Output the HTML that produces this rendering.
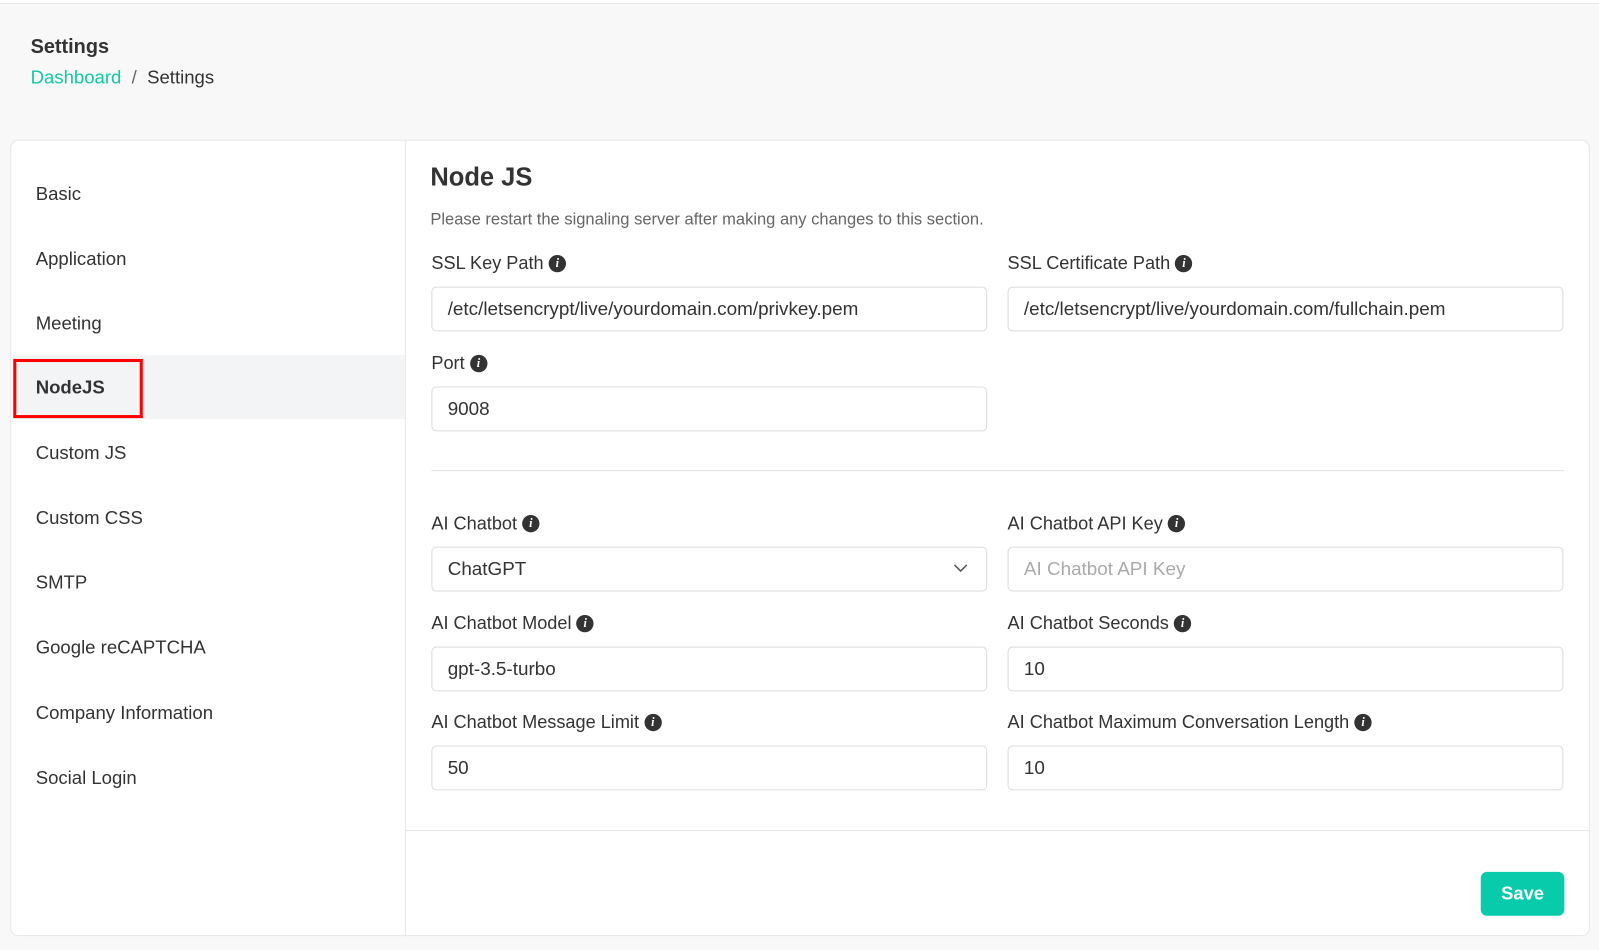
<!DOCTYPE html><html><head><style>
*{box-sizing:border-box}body{margin:0;width:1599px;height:950px;background:#f8f8f8;font-family:"Liberation Sans",sans-serif;color:#333;position:relative;overflow:hidden}
#w{position:absolute;left:0;top:0;width:1568px;height:932px;transform:scale(1.0198);transform-origin:0 0}
.a{position:absolute}
.top{left:0;top:0;width:1568px;height:4px;border-bottom:1px solid #e6e6e6;background:#fff}
.card{left:10px;top:137px;width:1549px;height:781px;background:#fff;border:1px solid #e8e8e8;border-radius:8px}
.side{left:10px;top:137px;width:388px;height:781px;border-right:1px solid #e8e8e8}
.it{position:absolute;left:35px;font-size:18.2px;color:#333;line-height:20px}
.lbl{position:absolute;font-size:17.8px;color:#333;line-height:20px;display:flex;align-items:center;gap:5px}
.i{width:17px;height:17px;border-radius:50%;background:#333;color:#fff;font-size:12px;font-weight:bold;font-family:"Liberation Serif",serif;font-style:italic;display:inline-flex;align-items:center;justify-content:center}
.in{position:absolute;height:44px;border:1px solid #dcdcdc;border-radius:5px;font-size:18.5px;padding-left:15px;line-height:42px;color:#333;width:545px}
.L{left:423px}.R{left:988px}
</style></head><body><div id="w">
<div class="a top"></div>
<div class="a" style="left:30px;top:35px;font-size:19.5px;font-weight:bold;color:#333">Settings</div>
<div class="a" style="left:30px;top:66px;font-size:18.2px"><span style="color:#12c9a6">Dashboard</span><span style="color:#666">&nbsp; / &nbsp;</span>Settings</div>
<div class="a card"></div>
<div class="a side"></div>
<div class="a" style="left:12px;top:348px;width:385px;height:63px;background:#f3f4f6"></div>
<div class="a" style="left:13px;top:352px;width:127px;height:58px;border:3px solid #f00"></div>
<div class="it" style="top:180px">Basic</div>
<div class="it" style="top:244px">Application</div>
<div class="it" style="top:307px">Meeting</div>
<div class="it" style="top:370px;font-weight:bold">NodeJS</div>
<div class="it" style="top:434px">Custom JS</div>
<div class="it" style="top:498px">Custom CSS</div>
<div class="it" style="top:561px">SMTP</div>
<div class="it" style="top:625px">Google reCAPTCHA</div>
<div class="it" style="top:689px">Company Information</div>
<div class="it" style="top:753px">Social Login</div>
<div class="a" style="left:422px;top:160px;font-size:25px;font-weight:bold;color:#333">Node JS</div>
<div class="a" style="left:422px;top:206px;font-size:16.2px;color:#666">Please restart the signaling server after making any changes to this section.</div>
<div class="lbl L" style="top:248px">SSL Key Path <span class="i">i</span></div>
<div class="lbl R" style="top:248px">SSL Certificate Path <span class="i">i</span></div>
<div class="in L" style="top:281px">/etc/letsencrypt/live/yourdomain.com/privkey.pem</div>
<div class="in R" style="top:281px">/etc/letsencrypt/live/yourdomain.com/fullchain.pem</div>
<div class="lbl L" style="top:346px">Port <span class="i">i</span></div>
<div class="in L" style="top:379px">9008</div>
<div class="a" style="left:423px;top:461px;width:1111px;height:1px;background:#e3e3e3"></div>
<div class="lbl L" style="top:503px">AI Chatbot <span class="i">i</span></div>
<div class="lbl R" style="top:503px">AI Chatbot API Key <span class="i">i</span></div>
<div class="in L" style="top:536px">ChatGPT<svg style="position:absolute;right:18px;top:16px" width="14" height="9" viewBox="0 0 14 9"><path d="M1 1l6 6 6-6" fill="none" stroke="#555" stroke-width="1.5"/></svg></div>
<div class="in R" style="top:536px;color:#aaa">AI Chatbot API Key</div>
<div class="lbl L" style="top:601px">AI Chatbot Model <span class="i">i</span></div>
<div class="lbl R" style="top:601px">AI Chatbot Seconds <span class="i">i</span></div>
<div class="in L" style="top:634px">gpt-3.5-turbo</div>
<div class="in R" style="top:634px">10</div>
<div class="lbl L" style="top:698px">AI Chatbot Message Limit <span class="i">i</span></div>
<div class="lbl R" style="top:698px">AI Chatbot Maximum Conversation Length <span class="i">i</span></div>
<div class="in L" style="top:731px">50</div>
<div class="in R" style="top:731px">10</div>
<div class="a" style="left:398px;top:814px;width:1160px;height:1px;background:#e6e6ee"></div>
<div class="a" style="left:1452px;top:855px;width:82px;height:43px;background:#08cbab;border-radius:6px;color:#fff;font-size:18px;font-weight:bold;text-align:center;line-height:43px">Save</div>
</div></body></html>
